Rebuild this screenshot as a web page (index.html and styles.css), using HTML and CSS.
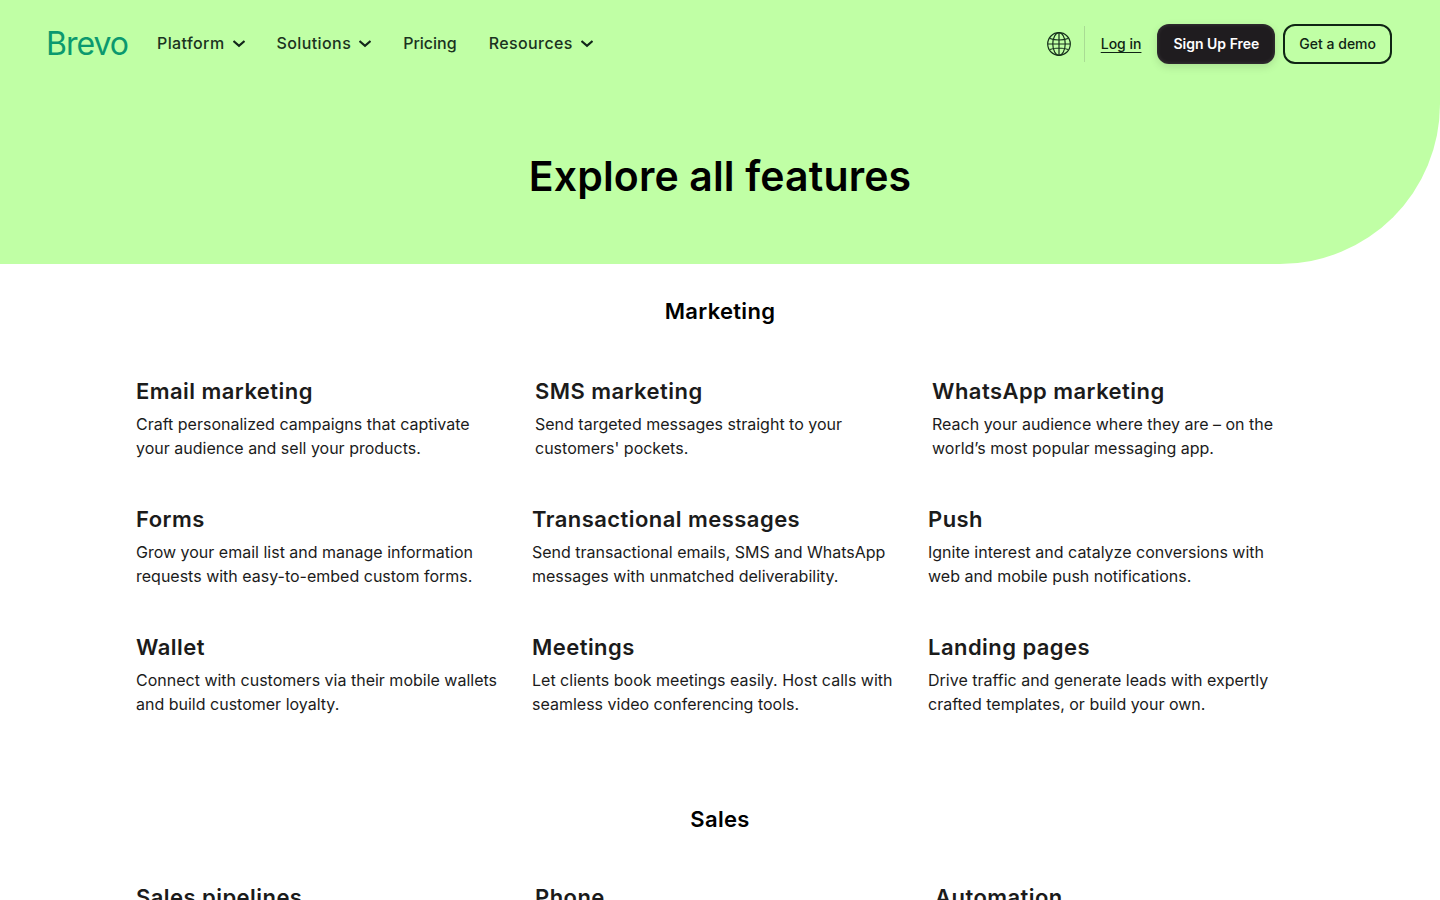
FILE: index.html
```html
<!DOCTYPE html>
<html lang="en">
<head>
    <meta charset="UTF-8">
    <meta name="viewport" content="width=device-width, initial-scale=1.0">
    <title>Explore all features | Brevo</title>
    <link rel="stylesheet" href="styles.css">
</head>
<body>
    <div class="hero">
        <header class="nav">
            <a class="logo" href="#">Brevo</a>
            <nav class="menu">
                <a href="#">Platform <svg class="chevron" viewBox="0 0 12 8"><path d="M.5 1 6 5.800 11.500 1"/></svg></a>
                <a href="#">Solutions <svg class="chevron" viewBox="0 0 12 8"><path d="M.5 1 6 5.800 11.500 1"/></svg></a>
                <a class="plain" href="#">Pricing</a>
                <a href="#">Resources <svg class="chevron" viewBox="0 0 12 8"><path d="M.5 1 6 5.800 11.500 1"/></svg></a>
            </nav>
            <div class="actions">
                <svg class="globe" viewBox="0 0 24 24">
                    <circle cx="12" cy="12" r="11.300"/>
                    <ellipse cx="12" cy="12" rx="6.200" ry="11.300"/>
                    <path d="M12 .7v22.600M3 6.500c5 2 13 2 18 0M.7 12h22.600M3 17.500c5-2 13-2 18 0"/>
                </svg>
                <span class="divider"></span>
                <a class="login" href="#">Log in</a>
                <a class="btn btn-dark" href="#">Sign Up Free</a>
                <a class="btn btn-outline" href="#">Get a demo</a>
            </div>
        </header>
        <h1>Explore all features</h1>
    </div>

    <main class="content">
        <section class="group">
            <h2>Marketing</h2>
            <div class="row row-first">
                <div class="feature">
                    <h3>Email marketing</h3>
                    <p>Craft personalized campaigns that captivate your audience and sell your products.</p>
                </div>
                <div class="feature">
                    <h3>SMS marketing</h3>
                    <p>Send targeted messages straight to your customers' pockets.</p>
                </div>
                <div class="feature">
                    <h3>WhatsApp marketing</h3>
                    <p>Reach your audience where they are – on the world’s most popular messaging app.</p>
                </div>
            </div>
            <div class="row">
                <div class="feature">
                    <h3>Forms</h3>
                    <p>Grow your email list and manage information requests with easy-to-embed custom forms.</p>
                </div>
                <div class="feature">
                    <h3>Transactional messages</h3>
                    <p>Send transactional emails, SMS and WhatsApp messages with unmatched deliverability.</p>
                </div>
                <div class="feature">
                    <h3>Push</h3>
                    <p>Ignite interest and catalyze conversions with web and mobile push notifications.</p>
                </div>
            </div>
            <div class="row">
                <div class="feature">
                    <h3>Wallet</h3>
                    <p>Connect with customers via their mobile wallets and build customer loyalty.</p>
                </div>
                <div class="feature">
                    <h3>Meetings</h3>
                    <p>Let clients book meetings easily. Host calls with seamless video conferencing tools.</p>
                </div>
                <div class="feature">
                    <h3>Landing pages</h3>
                    <p>Drive traffic and generate leads with expertly crafted templates, or build your own.</p>
                </div>
            </div>
        </section>

        <section class="group">
            <h2>Sales</h2>
            <div class="row row-sales">
                <div class="feature"><h3>Sales pipelines</h3></div>
                <div class="feature"><h3>Phone</h3></div>
                <div class="feature"><h3>Automation</h3></div>
            </div>
        </section>
    </main>
</body>
</html>
```

FILE: styles.css
```css
* {
    margin: 0;
    padding: 0;
    box-sizing: border-box;
}

html, body {
    height: 900px;
    overflow: hidden;
}

body {
    background-color: #fff;
    color: #1b1b1b;
    font-family: Inter, 'Liberation Sans', sans-serif;
}

a {
    color: inherit;
    text-decoration: none;
}

.hero {
    height: 264px;
    background: #c0ffa5;
    border-bottom-right-radius: 160px;
}

.nav {
    height: 88px;
    padding: 0 48px;
    display: flex;
    align-items: center;
}

.logo {
    width: 109px;
    margin-left: -2px;
    margin-right: 2px;
    padding-bottom: 2px;
    font-size: 32px;
    font-weight: 400;
    letter-spacing: -1px;
    color: #0b996e;
}

.menu {
    display: flex;
    align-items: center;
    gap: 32px;
    font-size: 16px;
    font-weight: 500;
    letter-spacing: 0.4px;
    color: #1a3320;
    padding-bottom: 2px;
}

.menu a {
    display: flex;
    align-items: center;
    gap: 8px;
}

.menu .plain {
    letter-spacing: 0;
}

.chevron {
    width: 12px;
    height: 8px;
    margin-top: 2px;
    fill: none;
    stroke: #12261a;
    stroke-width: 2.2;
}

.actions {
    margin-left: auto;
    display: flex;
    align-items: center;
}

.globe {
    width: 24px;
    height: 24px;
    fill: none;
    stroke: #16301c;
    stroke-width: 1.200;
}

.divider {
    width: 1px;
    height: 36px;
    background: #a9dc94;
    margin: 0 16px 0 13px;
}

.login {
    font-size: 14px;
    font-weight: 500;
    color: #0f2414;
    text-decoration: underline;
    text-decoration-skip-ink: none;
    text-underline-offset: 3px;
    margin-right: 16px;
    padding-bottom: 2px;
}

.btn {
    height: 40px;
    display: flex;
    align-items: center;
    padding: 0 16px 2px;
    border-radius: 12px;
    font-size: 14px;
    font-weight: 500;
}

.btn-dark {
    background: #1f1c1f;
    color: #fff;
    font-weight: 600;
    box-shadow: 0 3px 8px rgba(0,0,0,0.12), inset 0 0 4px rgba(255,255,255,0.15);
    margin-right: 8px;
}

.btn-outline {
    border: 2px solid #0f2414;
    padding: 0 14px 2px;
    color: #0f2414;
}

h1 {
    margin-top: 62px;
    text-align: center;
    font-size: 41px;
    line-height: 52px;
    font-weight: 600;
    letter-spacing: 0.15px;
    color: #000;
}

.content {
    padding: 0 136px;
}

.group h2 {
    text-align: center;
    font-size: 22px;
    line-height: 32px;
    font-weight: 600;
    letter-spacing: 0.3px;
    color: #000;
}

.group {
    padding-top: 31px;
}

.group + .group {
    padding-top: 87px;
}

.row {
    display: grid;
    grid-template-columns: 396px 396px 1fr;
    margin-top: 43px;
}

.row-first {
    grid-template-columns: 399px 397px 1fr;
    margin-top: 48px;
}

.row-sales {
    grid-template-columns: 399px 400px 1fr;
    margin-top: 46px;
}

.feature h3 {
    font-size: 22px;
    line-height: 32px;
    font-weight: 600;
    letter-spacing: 0.45px;
    color: #1b1b1b;
}

.feature p {
    margin-top: 5px;
    max-width: 368px;
    font-size: 16px;
    line-height: 24px;
    color: #1b1b1b;
}
```
